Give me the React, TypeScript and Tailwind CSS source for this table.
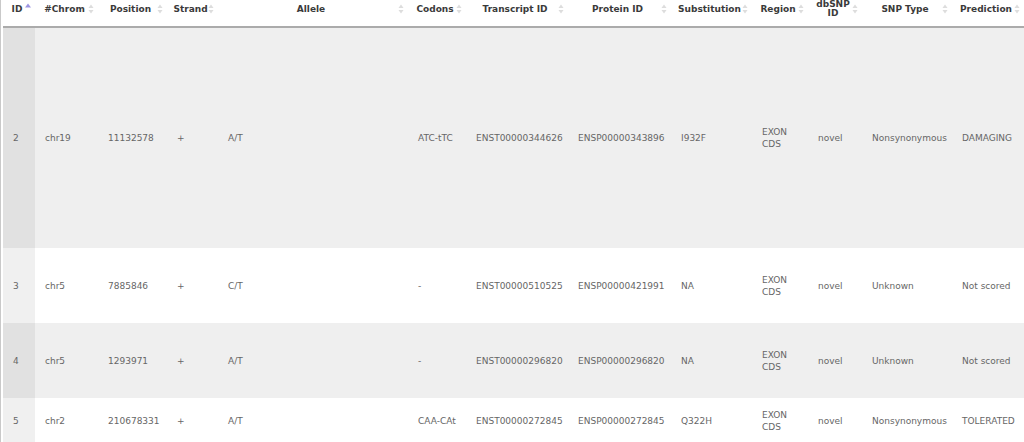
import React from "react";

type Row = {
    id: string; chrom: string; pos: string; strand: string; allele: string; codons: string;
    transcript: string; protein: string; subst: string; region: string; dbsnp: string;
    snpType: string; prediction: string; h: string; shade: boolean;
};

const rows: Row[] = [
    {id: "2", chrom: "chr19", pos: "11132578", strand: "+", allele: "A/T", codons: "ATC-tTC", transcript: "ENST00000344626", protein: "ENSP00000343896", subst: "I932F", region: "EXON CDS", dbsnp: "novel", snpType: "Nonsynonymous", prediction: "DAMAGING", h: "h-[220px]", shade: true},
    {id: "3", chrom: "chr5", pos: "7885846", strand: "+", allele: "C/T", codons: "-", transcript: "ENST00000510525", protein: "ENSP00000421991", subst: "NA", region: "EXON CDS", dbsnp: "novel", snpType: "Unknown", prediction: "Not scored", h: "h-[75px]", shade: false},
    {id: "4", chrom: "chr5", pos: "1293971", strand: "+", allele: "A/T", codons: "-", transcript: "ENST00000296820", protein: "ENSP00000296820", subst: "NA", region: "EXON CDS", dbsnp: "novel", snpType: "Unknown", prediction: "Not scored", h: "h-[75px]", shade: true},
    {id: "5", chrom: "chr2", pos: "210678331", strand: "+", allele: "A/T", codons: "CAA-CAt", transcript: "ENST00000272845", protein: "ENSP00000272845", subst: "Q322H", region: "EXON CDS", dbsnp: "novel", snpType: "Nonsynonymous", prediction: "TOLERATED", h: "h-[46px]", shade: false},
];

const columns = [
    {label: "ID", w: "w-[32px]"},
    {label: "#Chrom", w: "w-[63px]"},
    {label: "Position", w: "w-[69px]"},
    {label: "Strand", w: "w-[51px]"},
    {label: "Allele", w: "w-[190px]"},
    {label: "Codons", w: "w-[58px]"},
    {label: "Transcript ID", w: "w-[102px]"},
    {label: "Protein ID", w: "w-[103px]"},
    {label: "Substitution", w: "w-[81px]"},
    {label: "Region", w: "w-[56px]"},
    {label: "dbSNP ID", w: "w-[54px]"},
    {label: "SNP Type", w: "w-[90px]"},
    {label: "Prediction", w: "w-[72px]"},
];

// datatables style sort arrows
const SortIcon = ({active}: { active?: boolean }) => (
    <svg width="6" height="12" viewBox="0 0 6 12" className="shrink-0">
        {active ? (
            <path d="M0 4.5 L3 0.5 L6 4.5Z" fill="#9d95e2"/>
        ) : (
            <>
                <path d="M0.5 5 L3 1.5 L5.5 5Z" fill="#dddddd"/>
                <path d="M0.5 7 L3 10.5 L5.5 7Z" fill="#dddddd"/>
            </>
        )}
    </svg>
);

const App = () => {
    return (
        <div className="min-h-[442px] bg-white border-l border-[#c9c9c9] pl-[2px]"
             style={{fontFamily: '"DejaVu Sans", Verdana, sans-serif'}}>
            <table className="table-fixed w-[1021px] border-separate border-spacing-0">
                <colgroup>
                    {columns.map((c) => <col key={c.label} className={c.w}/>)}
                </colgroup>
                <thead>
                <tr>
                    {columns.map((c, i) => (
                        <th key={c.label}
                            className="h-[27px] p-0 pl-[6px] pr-[4px] pb-[8px] align-middle border-b-2 border-[#ababab] font-bold text-[9px] leading-[9px] text-[#3a3a3a]">
                            <div className="flex items-center">
                                <span className="flex-1 text-center">{c.label === "dbSNP ID" ? <>dbSNP<br/>ID</> : c.label}</span>
                                <SortIcon active={i === 0}/>
                            </div>
                        </th>
                    ))}
                </tr>
                </thead>
                <tbody>
                {rows.map((r) => {
                    const cells = [r.id, r.chrom, r.pos, r.strand, r.allele, r.codons, r.transcript, r.protein, r.subst, r.region, r.dbsnp, r.snpType, r.prediction];
                    return (
                        <tr key={r.id} className={`${r.h} ${r.shade ? 'bg-[#efefef]' : 'bg-white'}`}>
                            {cells.map((v, i) => (
                                <td key={i}
                                    className={`pl-[10px] pr-[2px] py-0 align-middle text-left text-[9px] leading-[12px] text-[#666] ${i === 0 ? (r.shade ? 'bg-[#e1e1e1]' : 'bg-[#f0f0f0]') : ''}`}>
                                    {v === "EXON CDS" ? <>EXON<br/>CDS</> : v}
                                </td>
                            ))}
                        </tr>
                    );
                })}
                </tbody>
            </table>
        </div>
    );
};

export default App;
